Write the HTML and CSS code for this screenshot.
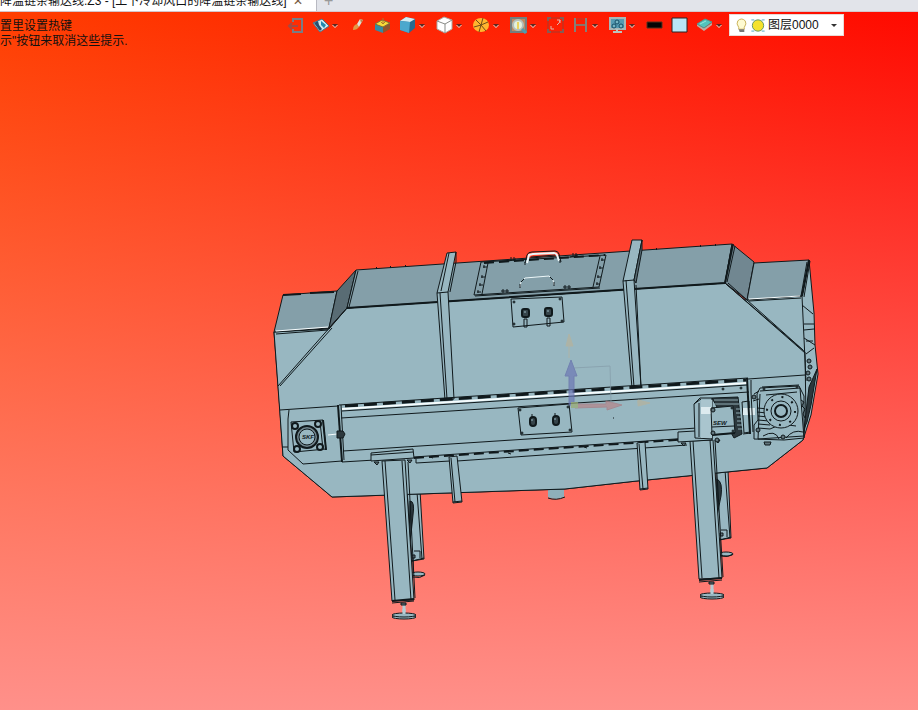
FILE: index.html
```html
<!DOCTYPE html>
<html lang="zh-CN">
<head>
<meta charset="utf-8">
<title>降温链条输送线</title>
<link rel="stylesheet" href="styles.css">
</head>
<body>
<header class="tabs">
  <div class="tab"><span class="tab-title">降温链条输送线.Z3 - [上下冷却风口的降温链条输送线]</span><button class="tab-close" aria-label="关闭">✕</button></div>
  <button class="tab-add" aria-label="新建">+</button>
</header>
<main class="viewport">
  <svg class="model" viewBox="0 12 918 698" role="img" aria-label="降温链条输送线模型">
    <g class="line">
      <!-- rear supports -->
      <path class="face" d="M407 490L420 490L424 559L412 561ZM716 472L728 470L731 538L718 540Z"/>
      <path d="M417 492L422 559M725 470L730 538M412 561L424 558M720 540L731 537"/>
      <path class="dark" d="M410 501Q415 501 413 515L411 534L409 544ZM717 479Q723 482 721 496L717 516Z"/>
      <path d="M414 551h6v7M413 556v17M721 530h6v7M720 538v14"/>
      <path class="bolts" d="M412 555h3v3h-3zM720 533h3v3h-3z"/>
      <ellipse class="face" cx="418" cy="574" rx="7" ry="2"/><ellipse class="face" cx="726" cy="554" rx="7" ry="2"/>
      <path d="M413 577Q420 579 425 575M721 556Q728 558 733 554"/>
      <!-- body -->
      <path class="cylinder" d="M548 488V497Q556 501 564 497V487Z"/><path d="M548 498Q556 501 565 497"/>
      <path class="face" d="M274 332L802 296L809 260L814 313L815 345L818 374L811 415L803 440L767 468L637 481L565 489L332 497L283 456L280 411Z"/>
      <path class="face" d="M274 332L329 329L347 308L725 283L805 352L806 420L803 440L767 468L637 481L565 489L332 497L283 456Z"/>
      <path class="top" d="M283 295L337 291L329 328L274 332Z"/>
      <path class="shade" d="M337 291L356 270L347 308L329 328Z"/>
      <path class="top" d="M356 270L732 244L725 283L347 308Z"/>
      <path class="slant" d="M732 244L754 262L747 300L725 283Z"/>
      <path class="top" d="M754 263L809 260L802 296L747 300Z"/>
      <path class="bold" d="M283 295L301 294M310 293L334 292"/>
      <path class="white" d="M276 331L328 327M749 299L800 296"/>
      <path d="M276 334L328 330M749 301L801 298M349 307L358 271M278 386L347 308M280 386L332 328M725 283L805 353M728 283L803 350M727 282L735 246M801 296L807 262M804 297L810 261M802 296L806 381"/>
      <path class="bold" d="M347 308L725 283M725 283L733 244M802 296L809 260"/>
      <path d="M802 305L813 314M804 324H814M804 330L814 329M804 338L815 345M806 341H813M806 354L814 348M280 410L338 406M748 379L805 375"/>
      <path class="dark" d="M809 387L817 369L811 405L807 422L804 429Z"/>
      <g class="bolts"><circle cx="809" cy="361" r="2"/><circle cx="810" cy="367" r="2"/><circle cx="808" cy="373" r="2"/><circle cx="809" cy="379" r="2"/></g>
      <path class="dots" d="M376 268h1M390 267h1M405 266h1M656 249h1M700 246h1M715 245h1"/>
      <!-- vertical ribs -->
      <path class="face" d="M447 253L456 252L448 292L454 399L445 400L437 293ZM632 240L642 240L634 280L641 387L632 388L623 281Z"/>
      <path d="M437 293L448 292M440 293L447 399M441 291L449 253M623 281L634 280M626 280L634 387"/>
      <path class="shade" d="M642 240V250L636 283L634 280Z"/><path d="M456 252V262L450 292M636 285L641 387"/>
      <!-- access hatch -->
      <path d="M481 262L606 255L599 287L474 295Z"/>
      <path d="M475 296L600 288"/>
      <path class="bold seam" d="M484 263L605 255"/>
      <path d="M488 263L482 294M600 256L593 287"/>
      <path class="bolts" d="M484 265v3m-1-1h4M482 275v3m-1-1h4M480 283v3m-1-1h4M478 290v3m-1-1h4M602 258v3m-1-1h4M600 266v3m-1-1h4M598 275v3m-1-1h4M597 282v3m-1-1h4M501 291h8m-6-2v4m4-4v4M563 287h8m-6-2v4m4-4v4M509 261l7-2m-5-2v4m3-4v4M570 257l8-2m-5-2v4m3-4v4"/>
      <path d="M525 263L527 255Q528 252 532 252L555 251Q558 251 559 254L561 262M531 257L555 255"/>
      <path class="handle" d="M527 263L529 255L533 254L554 253Q556 253 557 255L559 261"/>
      <path class="handle thin" d="M520 287L521 282L525 278L549 276L553 280L554 285"/>
      <path class="bolts" d="M525 262v3M560 260v3M520 284v4M554 282v4M521 282l3-3M550 277l3 3"/>
      <!-- control plates -->
      <path d="M511 299L562 297L564 322L513 327ZM518 408L569 404L572 432L521 435Z"/>
      <g class="bolts"><circle cx="514" cy="302" r="1"/><circle cx="560" cy="299" r="1"/><circle cx="514" cy="324" r="1"/><circle cx="562" cy="321" r="1"/><circle cx="520" cy="410" r="1"/><circle cx="568" cy="407" r="1"/><circle cx="522" cy="433" r="1"/><circle cx="570" cy="430" r="1"/></g>
      <g class="knob"><rect x="522" y="309" width="7" height="8" rx="2"/><rect x="545" y="308" width="7" height="8" rx="2"/><rect x="530" y="417" width="6" height="9" rx="3"/><rect x="553" y="416" width="6" height="9" rx="3"/></g>
      <path d="M524 319h3v8h-3zM547 318h3v8h-3zM532 414v3M555 413v3"/>
      <path class="pale" d="M524 312h2M547 311h2M531 420h2M554 419h2"/>
      <!-- conveyor -->
      <path d="M339 405L748 378"/>
      <path class="slats" d="M345 406L746 380"/>
      <path class="white rail" d="M342 409L747 383"/>
      <path d="M342 411L747 385M341 418L749 392M343 451L697 428M342 462L375 460"/>
      <path d="M457 461L687 445M416 459V463L450 461"/><path class="seam" d="M414 458L690 439"/><path d="M414 457L690 438"/>
      <path class="bold" d="M338 405L342 462"/><path d="M341 405L344 460"/>
      <path d="M289 410L288 419V450L303 464L342 461M282 447h6"/>
      <path class="face" d="M449 457L457 456L462 502L453 503ZM637 443L645 442L648 489L640 490Z"/>
      <path d="M451 458L455 502M639 444L643 489M453 502L462 501M640 489L648 488"/>
      <path class="bolts" d="M430 457l3 1M508 453l3 1M584 447l3 1M613 418h1"/>
      <!-- left bearing -->
      <path class="face" d="M291 422L323 420L326 449L294 452Z"/><path class="bold" d="M323 420L326 450"/><path d="M320 422L323 449"/>
      <g class="eyes"><circle cx="295" cy="426" r="3"/><circle cx="318" cy="424" r="3"/><circle cx="297" cy="449" r="3"/><circle cx="320" cy="447" r="3"/></g>
      <circle class="bearing" cx="307" cy="437" r="11"/><circle class="face" cx="307" cy="437" r="8"/>
      <text class="mark" x="302" y="439">SKF</text>
      <path class="white" d="M328 435L337 434"/><path class="dark" d="M337 431h6l2 3-2 4h-6z"/>
      <!-- front legs -->
      <path class="face" d="M382 461L405 460L414 600L392 601ZM690 441L713 440L722 578L699 579Z"/>
      <path d="M385 461L395 600M402 461L411 600M408 462L415 598M693 441L702 578M710 440L719 578M715 440L723 577"/>
      <path class="face" d="M371 453L413 449L414 458L371 461ZM678 432L695 431L712 430V440L678 442Z"/>
      <path d="M371 455L413 452"/>
      <path class="bold" d="M392 601L414 599M699 580L722 578"/><path d="M392 603L414 601M699 582L722 580"/>
      <path class="stem" d="M404 605V614M712 584V594"/><path class="bolts" d="M401 603h5v2h-5zM709 582h5v2h-5zM374 462h5l-2 3zM407 460h5l-2 3zM681 443h5l-2 3zM715 440h5l-2 3z"/>
      <ellipse class="face" cx="404" cy="617" rx="12" ry="2"/><ellipse class="face" cx="404" cy="615" rx="12" ry="2"/><ellipse class="face" cx="712" cy="597" rx="12" ry="2"/><ellipse class="face" cx="712" cy="595" rx="12" ry="2"/>
      <path class="stem" d="M404 609V614M712 589V594"/>
      <!-- drive motor -->
      <path class="face" d="M700 398L712 398V439L695 438L694 404Z"/><path class="drum" d="M701 400H712V438H701Z"/><path class="highlight" d="M701 407H711V414H701Z"/>
      <path d="M694 404L701 399M699 403V437"/>
      <path class="dark" d="M712 398L738 397L742 434L734 438Z"/>
      <path class="face" d="M711 408L733 406L735 433L712 435Z"/>
      <path class="fins" d="M714 400H738M714 404H739M736 409h5M736 413h5M737 417h5M737 421h5M737 425h5M738 429h4"/>
      <path class="face" d="M742 402L749 401L750 432L744 433Z"/><path class="highlight" d="M743 408H755V415H743Z"/><path d="M712 427L734 426"/>
      <text class="mark" x="713" y="425">SEW</text>
      <path class="bold" d="M747 378L750 434M712 435L735 433"/><path d="M743 434L751 433M751 380V392L753 432"/>
      <g class="bolts"><circle cx="713" cy="410" r="2"/><circle cx="732" cy="408" r="1"/><circle cx="713" cy="433" r="2"/><circle cx="733" cy="431" r="1"/><circle cx="717" cy="440" r="2"/><circle cx="723" cy="389" r="1"/><circle cx="741" cy="388" r="1"/><path d="M764 442h7l-1 3h-5z"/></g>
      <!-- gearbox -->
      <path class="face" d="M757 394L760 388L799 386L804 396L804 438L784 440L754 439V425L758 420Z"/>
      <path d="M760 391L800 388M762 387L799 385M760 394L758 439M800 388L804 438"/>
      <path class="fins dark-line" d="M757 408l12 1M757 412l10 1M758 416l10 1M758 420l11 1M758 424l12 1M758 428l12 1"/>
      <path d="M766 395L797 392M770 429Q781 423 796 426M763 436Q775 429 779 439M786 438Q793 429 803 432M758 439L804 436"/>
      <circle class="face" cx="781" cy="411" r="17"/><circle cx="781" cy="411" r="10"/><circle class="bold" cx="781" cy="411" r="6"/>
      <circle class="ring" cx="781" cy="411" r="14"/>
      <g class="bolts"><circle cx="783" cy="437" r="2"/><circle cx="758" cy="430" r="2"/><circle cx="754" cy="397" r="2"/><circle cx="764" cy="389" r="1"/><circle cx="797" cy="387" r="1"/><path d="M754 394l5-3M753 401l6-2M801 400l3 2-2 4 3 3-2 5 2 4"/></g>
    </g>
    <!-- origin triad -->
    <g class="triad">
      <path class="plane" d="M573 368L610 366L611 402"/>
      <path class="axis-y" d="M569 358V346M566 346L569 334L573 346ZM637 402H641M638 400L650 403L638 406Z"/>
      <path class="axis-z" d="M569 405V376H565L571 360L577 376H574V405Z"/>
      <path class="axis-x" d="M575 404L606 404V401L622 405L607 410V407L575 408Z"/>
      <path class="origin" d="M571 402h7v6h-7z"/>
    </g>
  </svg>

  <div class="overlay">
    <p class="hint">置里设置热键<br>示"按钮来取消这些提示.</p>
    <div class="tools">
      <button class="tool" aria-label="退出"><svg viewBox="0 0 17 18"><path d="M6 6V3H15V16H6V13" fill="none" stroke="#777d85" stroke-width="2"/><path d="M2 10H11M5 7L2 10 5 13" fill="none" stroke="#a44a44" stroke-width="2"/></svg></button>
      <button class="tool menu" aria-label="视图"><svg viewBox="0 0 17 18"><path d="M1 7L10 3L17 10L8 16Z" fill="#d3e9ef" stroke="#497789"/><path d="M2 7L6 5L7 9L10 13L8 15Z" fill="#244e70"/><path d="M9 5L14 9L12 12L9 9Z" fill="#2389ae"/></svg><span class="caret"></span></button>
      <button class="tool" aria-label="画笔"><svg viewBox="0 0 17 18"><path d="M4 14Q4 9 8 8L10 11Q8 14 4 14" fill="#e19a46"/><path d="M8 8L11 3L14 4L10 11Z" fill="#e2e4d9"/><path d="M11 3L14 4L12 7" fill="#b98650"/></svg></button>
      <button class="tool" aria-label="剖面"><svg viewBox="0 0 17 18"><path d="M1 8L9 11V17L1 14Z" fill="#348ba5"/><path d="M9 11L16 7V13L9 17Z" fill="#91552d"/><path d="M1 8L8 4L16 7L9 11Z" fill="#f8dc38" stroke="#7b713b"/><path d="M9 2V8M7 6L9 8L11 6" stroke="#ad7930" fill="none"/></svg></button>
      <button class="tool menu" aria-label="着色"><svg viewBox="0 0 17 18"><path d="M1 5L7 1L16 3V12L10 17L1 14Z" fill="#276a91"/><path d="M1 5L7 1L16 3L11 6Z" fill="#d4edf2"/><path d="M1 5L11 6L10 17L1 14Z" fill="#4ba8cd"/></svg><span class="caret"></span></button>
      <button class="tool menu" aria-label="线框"><svg viewBox="0 0 17 18"><path d="M1 5L8 1L16 4V13L9 17L1 13Z" fill="#fff" stroke="#a9aaa4"/><path d="M1 5L9 8L16 4M9 8V17" fill="none" stroke="#898b87"/></svg><span class="caret"></span></button>
      <button class="tool menu" aria-label="分析"><svg viewBox="0 0 17 18"><ellipse cx="8" cy="9" rx="8" ry="7" fill="#ffb62f"/><path d="M8 9L3 4M8 9L10 2M8 9L15 6M8 9L13 15M8 9L6 16M8 9L1 11" stroke="#704d19"/></svg><span class="caret"></span></button>
      <button class="tool menu" aria-label="缩放"><svg viewBox="0 0 17 18"><path d="M1 2H16V16H1Z" fill="#bd8b62" stroke="#747e7e" stroke-width="2"/><circle cx="8" cy="9" r="5" fill="#e4f1dc" stroke="#b4c0bb" stroke-width="2"/><path d="M7 6H9V13H7Z" fill="#ead35e"/><path d="M12 13L16 17" stroke="#4f9cae" stroke-width="3"/></svg><span class="caret"></span></button>
      <button class="tool" aria-label="区域"><svg viewBox="0 0 17 18"><path d="M1 2H16V16H1Z" fill="none" stroke="#a73a2c"/><path d="M1 5V2H4M13 2H16V5M16 13V16H13M4 16H1V13" fill="none" stroke="#855c55" stroke-width="2"/><path d="M4 10V13H7M10 9Q13 7 13 4M10 4H13V7" fill="none" stroke="#e0b5ad"/></svg></button>
      <button class="tool menu" aria-label="测量"><svg viewBox="0 0 17 18"><path d="M3 2V16M14 2V16" stroke="#858078" stroke-width="2"/><path d="M4 9H13" stroke="#8c7168" stroke-width="2"/><path d="M5 3H12" stroke="#ae4030"/></svg><span class="caret"></span></button>
      <button class="tool menu" aria-label="显示"><svg viewBox="0 0 17 18"><path d="M1 2H16V13H1Z" fill="#559bb2" stroke="#a8b6b6" stroke-width="2"/><path d="M4 16H13M8 13V16" stroke="#bcc5bf" stroke-width="2"/><circle cx="8" cy="6" r="2" fill="#75b5c2" stroke="#144e67"/><circle cx="5" cy="10" r="2" fill="#75b5c2" stroke="#144e67"/><circle cx="12" cy="10" r="2" fill="#75b5c2" stroke="#144e67"/></svg><span class="caret"></span></button>
      <button class="tool" aria-label="线宽"><svg viewBox="0 0 17 18"><path d="M1 6H16V12H1Z" fill="#050505" stroke="#55321e"/></svg></button>
      <button class="tool" aria-label="颜色"><svg viewBox="0 0 17 18"><path d="M1 2H16V16H1Z" fill="#b9e5f5" stroke="#2b2424"/></svg></button>
      <button class="tool menu" aria-label="图层"><svg viewBox="0 0 17 18"><path d="M1 10L8 15L16 9V7L8 12L1 8Z" fill="#bdaaa0"/><path d="M1 8L9 3L16 6L8 12Z" fill="#52c3bd" stroke="#57908a"/><path d="M4 8L10 5" stroke="#95e6df"/></svg><span class="caret"></span></button>
    </div>
    <label class="layer">
      <svg class="bulb" viewBox="0 0 14 18"><path d="M4 11Q1 7 3 4Q7 0 11 4Q13 7 10 11V13H4Z" fill="#fffbd1" stroke="#c7ae53"/><path d="M4 13H10V16H5Z" fill="#777"/></svg>
      <svg class="sun" viewBox="0 0 16 18"><path d="M1 3H4M12 3H15M1 15H4M12 15H15" stroke="#9ecfe0" stroke-width="2"/><circle cx="8" cy="9" r="6" fill="#f5e22c" stroke="#5f9465"/></svg>
      <select aria-label="当前图层"><option>图层0000</option></select>
      <span class="arrow"></span>
    </label>
  </div>
</main>
</body>
</html>
```
FILE: styles.css
```css
* { box-sizing: border-box; }
body {
  margin: 0;
  min-height: 100vh;
  display: flex;
  flex-direction: column;
  background: #ff1000;
  color: #111;
  font-family: "Liberation Sans", "Noto Sans CJK SC", sans-serif;
  font-size: 12px;
}
button { padding: 0; border: 0; background: none; color: inherit; font: inherit; }
p { margin: 0; }

.tabs {
  height: 12px;
  display: flex;
  align-items: flex-end;
  overflow: hidden;
  background: #e2e4ea;
  border-bottom: 1px solid #d4c5cb;
}
.tab {
  flex: none;
  width: 317px;
  height: 12px;
  display: flex;
  align-items: flex-end;
  gap: 6px;
  background: #fff;
  border-right: 1px solid #b9bac2;
  white-space: nowrap;
  line-height: 18px;
  padding-bottom: 1px;
}
.tab-close { color: #765b42; line-height: 18px; }
.tab-add { margin-left: 7px; color: #999; font-size: 16px; line-height: 20px; }

.viewport {
  flex: 1;
  display: grid;
  align-items: start;
  background:
    linear-gradient(to bottom, rgba(255, 144, 138, 0), rgb(255, 144, 138)),
    linear-gradient(to right, #ff3e00, #ff2600 40%, #ff0a00);
}
.model, .overlay { grid-area: 1 / 1; }
.model { display: block; width: 100%; }
.overlay { display: grid; grid-template-columns: 287px auto auto; justify-content: start; gap: 0 4px; align-items: start; padding-top: 2px; }
.hint { line-height: 15px; padding-top: 5px; white-space: nowrap; margin-right: -4px; }
.tools { display: flex; gap: 8px; height: 22px; align-items: center; margin-left: -4px; }
.tool { flex: none; width: 17px; height: 18px; display: flex; align-items: center; gap: 3px; }
.tool.menu { width: 29px; }
.tool svg { flex: none; width: 17px; height: 18px; }
.caret, .arrow { border: 3px solid transparent; border-top-color: #5e2820; border-bottom: 0; }
.caret { filter: drop-shadow(0 1px 0 #ffd8cc); }
.layer { display: flex; align-items: center; width: 115px; height: 22px; padding: 0 6px 0 5px; background: #fff; border: 1px solid #eadad6; }
.bulb { width: 13px; height: 17px; flex: none; }
.sun { width: 16px; height: 17px; margin: 0 2px; flex: none; }
.layer select { appearance: none; flex: 1; min-width: 0; padding: 0; border: 0; background: none; color: #111; font: inherit; }
.arrow { border-top-color: #333; }

.line { fill: none; stroke: #10191c; stroke-width: 1; stroke-linejoin: round; }
.face { fill: #98b7c1; }
.top { fill: #849fa9; }
.slant { fill: #718791; }
.shade { fill: #596c74; }
.dark { fill: #2c383d; }
.cylinder { fill: #8eafba; stroke: none; }
.bold { stroke-width: 2; }
.white { stroke: #f6fcfd; }
.pale { stroke: #98b7c1; }
.stem { stroke: #b4cdd5; stroke-width: 3; }
.rail { stroke-width: 2; }
.slats { stroke-width: 3; stroke-dasharray: 13 6; }
.seam { stroke-width: 2; stroke-dasharray: 10 5; }
.dots { stroke-width: 2; }
.bolts { fill: #62757c; stroke-width: 1; }
.eyes { fill: #98b7c1; stroke-width: 2; }
.handle { stroke: #edf7f9; stroke-width: 2; }
.thin { stroke-width: 1; }
.knob { fill: #36444a; stroke-width: 2; }
.bearing { fill: #72868e; stroke-width: 2; }
.drum { fill: #a9c5ce; stroke: none; }
.highlight { fill: #dcebef; stroke: none; }
.fins { stroke: #8fabb4; }
.dark-line { stroke: #10191c; }
.ring { stroke-width: 2; stroke-dasharray: 2 9; }
.mark { fill: #10191c; stroke: none; font-size: 6px; font-weight: bold; font-style: italic; }
.triad { fill: none; opacity: .7; }
.plane { stroke: #849ba8; }
.axis-y { fill: #b7b29b; stroke: #b7b29b; }
.axis-z { fill: #6c78b5; stroke: #626ba9; }
.axis-x { fill: #b78489; stroke: #a87980; }
.origin { fill: #9aab72; }
```
